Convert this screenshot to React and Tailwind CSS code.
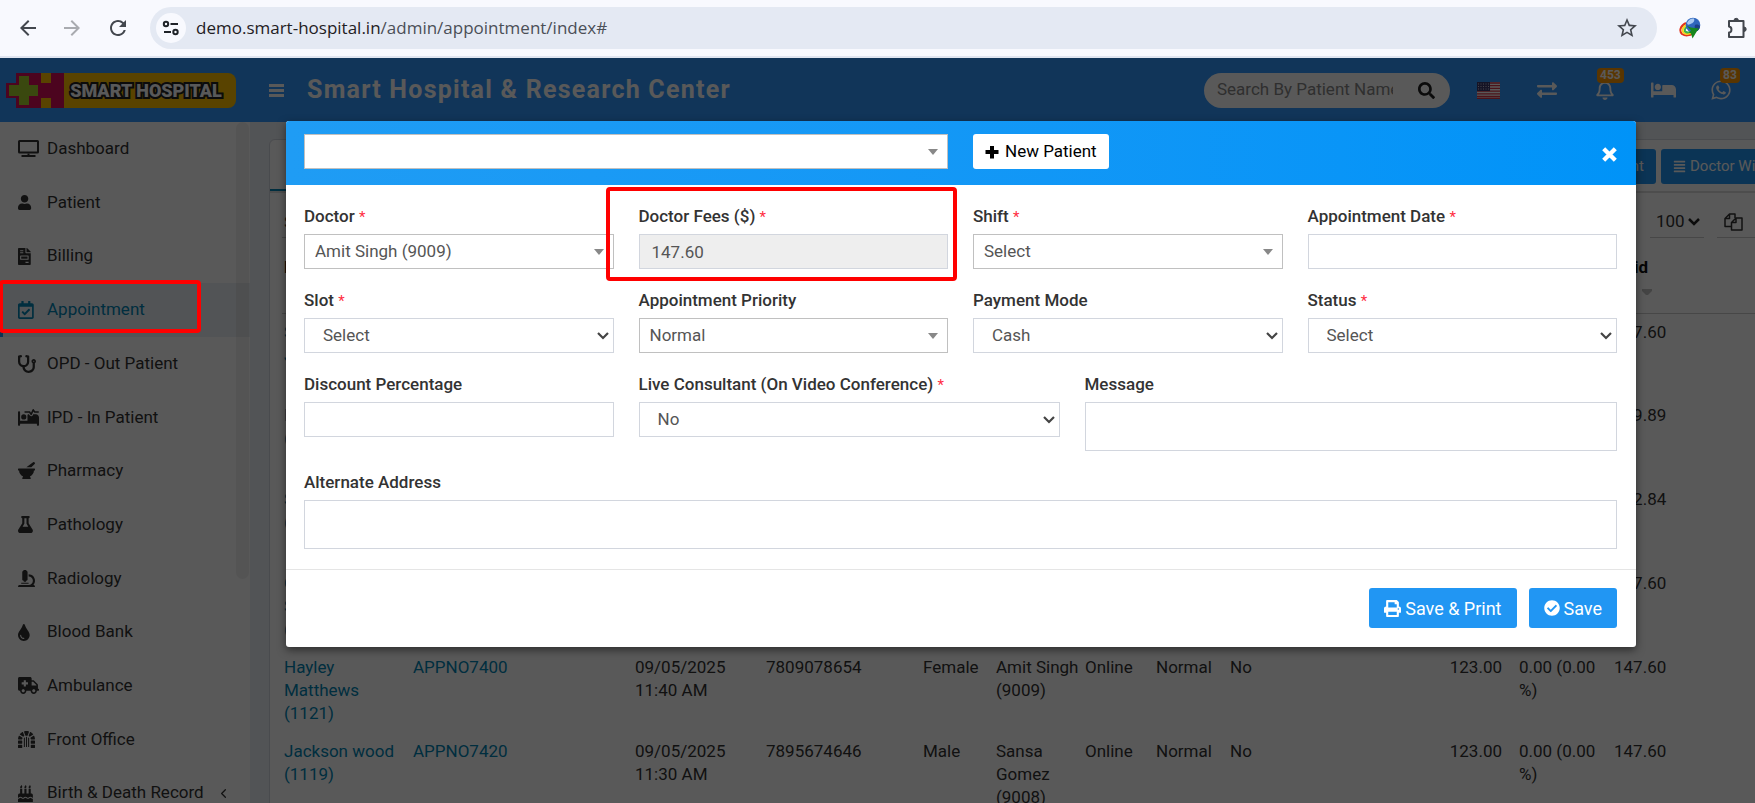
import {
  FaAlignJustify,
  FaAmbulance,
  FaBed,
  FaBirthdayCake,
  FaCheckCircle,
  FaDungeon,
  FaExchangeAlt,
  FaFileInvoice,
  FaFlask,
  FaMicroscope,
  FaMortarPestle,
  FaPrint,
  FaRegBell,
  FaRegCalendarCheck,
  FaSearch,
  FaStethoscope,
  FaTint,
  FaUser,
  FaWhatsapp,
} from "react-icons/fa";
import { FaBedPulse } from "react-icons/fa6";
import { MdArrowBack, MdArrowForward, MdRefresh, MdStarBorder } from "react-icons/md";
import { FiChevronLeft } from "react-icons/fi";

function Monitor({ className }) {
  return (
    <svg viewBox="0 0 21 17" className={className} fill="currentColor">
      <path fillRule="evenodd" d="M1.500 0h18A1.500 1.500 0 0 1 21 1.500v10.500a1.500 1.500 0 0 1-1.500 1.500h-18A1.500 1.500 0 0 1 0 12V1.500A1.500 1.500 0 0 1 1.500 0zM2 2v9.500h17V2z" />
      <path d="M9.500 13.500h2V15H9.500zM3.500 15h14v2h-14z" />
    </svg>
  );
}

const menu = [
  { label: "Dashboard", icon: Monitor, size: "h-[17px] w-[21px]" },
  { label: "Patient", icon: FaUser, size: "size-[15px]" },
  { label: "Billing", icon: FaFileInvoice, size: "size-[17px]" },
  { label: "Appointment", icon: FaRegCalendarCheck, size: "size-[18px]", active: true },
  { label: "OPD - Out Patient", icon: FaStethoscope, size: "size-[18px]" },
  { label: "IPD - In Patient", icon: FaBedPulse, size: "h-[17px] w-[21px]" },
  { label: "Pharmacy", icon: FaMortarPestle, size: "size-[17px]" },
  { label: "Pathology", icon: FaFlask, size: "size-[17px]" },
  { label: "Radiology", icon: FaMicroscope, size: "size-[17px]" },
  { label: "Blood Bank", icon: FaTint, size: "size-[17px]" },
  { label: "Ambulance", icon: FaAmbulance, size: "h-[17px] w-[21px]" },
  { label: "Front Office", icon: FaDungeon, size: "size-[17px]" },
  { label: "Birth & Death Record", icon: FaBirthdayCake, size: "size-[17px]", children: true },
];

const columns = [
  { label: "Patient Name", width: "w-[129px]" },
  { label: "Appointment No", width: "w-[222px]" },
  { label: "Date", width: "w-[131px]" },
  { label: "Phone", width: "w-[157px]" },
  { label: "Gender", width: "w-[73px]" },
  { label: "Doctor", width: "w-[89px]" },
  { label: "Source", width: "w-[71px]" },
  { label: "Priority", width: "w-[74px]" },
  { label: "Live", width: "w-[175px]" },
  { label: "Fees", width: "w-[114px]" },
  { label: "Discount", width: "w-[95px]" },
  { label: "Paid", width: "w-[180px]" },
];

const rows = [
  { name: ["Sam", "Jones (1124)"], no: "APPNO7396", time: "12:10 PM", phone: "7809078611", gender: "Male", doctor: "Amit Singh (9009)", fees: "123.00", paid: "147.60" },
  { name: ["Kevin", "(1123)"], no: "APPNO7397", time: "12:00 PM", phone: "7809078612", gender: "Male", doctor: "Amit Singh (9009)", fees: "133.00", paid: "159.89" },
  { name: ["Sara", "(1122)"], no: "APPNO7398", time: "11:55 AM", phone: "7809078613", gender: "Female", doctor: "Sansa Gomez (9008)", fees: "127.00", paid: "152.84" },
  { name: ["Olivier", "Smith", "(1120)"], no: "APPNO7399", time: "11:50 AM", phone: "7809078614", gender: "Male", doctor: "Amit Singh (9009)", fees: "123.00", paid: "147.60" },
  { name: ["Hayley", "Matthews", "(1121)"], no: "APPNO7400", time: "11:40 AM", phone: "7809078654", gender: "Female", doctor: "Amit Singh (9009)", fees: "123.00", paid: "147.60" },
  { name: ["Jackson wood", "(1119)"], no: "APPNO7420", time: "11:30 AM", phone: "7895674646", gender: "Male", doctor: "Sansa Gomez (9008)", fees: "123.00", paid: "147.60" },
];

function BrowserBar() {
  return (
    <div className="flex h-[58px] shrink-0 items-center border-b-2 border-[#e0e5f0] bg-[#f8f9fe] pl-4 text-[#43474e]">
      <button aria-label="Back" className="mr-5"><MdArrowBack className="size-6" /></button>
      <button aria-label="Forward" className="mr-[22px] text-[#a9abb0]"><MdArrowForward className="size-6" /></button>
      <button aria-label="Reload" className="mr-5"><MdRefresh className="size-6" /></button>
      <div className="flex h-[42px] flex-1 items-center rounded-full bg-[#e4e9f3] pr-[18px] pl-1.5">
        <button aria-label="Site information" className="mr-2.5 flex size-[30px] items-center justify-center rounded-full bg-[#f8f9fe]">
          <svg viewBox="0 0 18 16" className="h-4 w-[18px]" fill="none" stroke="#1f2328" strokeWidth="2">
            <circle cx="4" cy="4" r="2.2" />
            <path d="M8.500 4H16M2 12h7" />
            <circle cx="13.500" cy="12" r="2.200" />
          </svg>
        </button>
        <div className="flex-1 font-['Open_Sans','Noto_Sans',sans-serif] text-[17px] leading-6 text-[#4b4f57]">
          <span className="text-[#1f2023]">demo.smart-hospital.in</span>/admin/appointment/index#
        </div>
        <button aria-label="Bookmark"><MdStarBorder className="size-6" /></button>
      </div>
      <svg viewBox="0 0 22 22" className="ml-[22px] size-[22px]">
        <path d="M7 6c-6 3-7 8-4 11 3 2 8 2 11-1" fill="none" stroke="#e2341d" strokeWidth="2" />
        <path d="M7.500 8c-4 2-5 6-2.500 8 2 1.500 6 1 8-1" fill="none" stroke="#f5d31c" strokeWidth="2" />
        <path d="M8 10c-2.500 1.500-3 4-1 5s4 0 5-1" fill="none" stroke="#3bb54a" strokeWidth="2" />
        <circle cx="14" cy="8" r="7.300" fill="#2f66bd" />
        <path d="M8 6c1-3 4-5 7-4.500 1 3-1 4.500-3.500 5.500S8.500 8 8 6z" fill="#a9c8f0" />
        <path d="M16 8c2-1 4 0 5 1 0 2-1 4-3 5-2-1-3-4-2-6z" fill="#1b3f86" />
        <path d="M8 9l4 1.500 8 1-2 2.500-4.500 7.500-1.500-5-2-1 2-2z" fill="#17861f" />
      </svg>
      <svg viewBox="0 0 22 22" className="mr-[7px] ml-[25px] size-[22px]" fill="none" stroke="#43474e" strokeWidth="2" strokeLinejoin="round">
        <path d="M3 4h14.500v16H3v-4.500c3 0 3.500-5.500 0-6z" />
        <path d="M8 3.500a2.200 2.200 0 0 1 4.400 0zM18 10a2.200 2.200 0 0 1 0 4.400z" fill="#43474e" strokeWidth="1" />
      </svg>
    </div>
  );
}

function Logo() {
  return (
    <a href="#" className="flex h-[35px] w-[230px] overflow-hidden rounded-r-lg bg-[linear-gradient(90deg,transparent_12px,#ffbf00_12px)]">
      <svg viewBox="0 0 58 35" className="h-[35px] w-[58px] shrink-0">
        <path d="M0 0h14v35H0z" fill="#3298ff" />
        <path d="M10 0h48v35H10V25H0V10h10z" fill="#d90d5b" />
        <path d="M35 0h10v10H35zM35 25h10v10H35z" fill="#ffbf00" />
        <path d="M13 3h10v9h9v11h-9v9H13v-9H3V12h10z" fill="#a6cf2b" />
      </svg>
      <span className="flex-1 pr-2 text-center text-[18px] leading-[35px] font-black whitespace-nowrap text-white [-webkit-text-stroke:4px_#222] [paint-order:stroke_fill]">
        SMART HOSPITAL
      </span>
    </a>
  );
}

function UsFlag() {
  return (
    <svg viewBox="0 0 23 17" className="h-[17px] w-[23px]">
      <rect width="23" height="17" fill="#fff" />
      <path d="M0 1h23M0 3.700h23M0 6.400h23M0 9.100h23M0 11.800h23M0 14.500h23M0 16.500h23" stroke="#d8384a" strokeWidth="1.300" />
      <rect width="13" height="9" fill="#3c3b6e" />
      <path d="M1 2h12M1 4.500h12M1 7h12" stroke="#fff" strokeWidth="1" strokeDasharray="1 1.500" opacity=".7" />
    </svg>
  );
}

function NavIcon({ icon: Icon, label, badge, badgeClass, size }) {
  return (
    <button aria-label={label} className="relative flex h-6 w-[58px] items-center justify-center text-white">
      <Icon className={size} />
      {badge && (
        <span className={`absolute -top-2.5 rounded-sm bg-[#ff9800] px-[3px] text-[12px] leading-[15px] font-bold ${badgeClass}`}>
          {badge}
        </span>
      )}
    </button>
  );
}

function TopNav() {
  return (
    <header className="flex h-16 shrink-0 items-center bg-[#3298ff] pr-[5px] pl-1.5">
      <Logo />
      <button aria-label="Toggle menu" className="mr-[23px] ml-[33px] text-white">
        <svg viewBox="0 0 15 13" className="h-[13px] w-[15px]" fill="currentColor"><path d="M0 0h15v3H0zM0 5h15v3H0zM0 10h15v3H0z" /></svg>
      </button>
      <h1 className="flex-1 text-[25px] font-bold tracking-wider text-white">Smart Hospital &amp; Research Center</h1>
      <form className="flex h-[35px] w-[246px] items-center rounded-full bg-white pr-[15px] pl-[13px]">
        <input aria-label="Search patients" placeholder="Search By Patient Name" className="mr-auto w-[176px] text-[17px] text-[#444] outline-none placeholder:text-[#888]" />
        <button type="button" aria-label="Search"><FaSearch className="size-[17px] text-[#222]" /></button>
      </form>
      <button aria-label="Language" className="mr-[18px] ml-[27px]"><UsFlag /></button>
      <NavIcon icon={FaExchangeAlt} label="Switch branch" size="size-5" />
      <NavIcon icon={FaRegBell} label="Notifications" badge="453" badgeClass="left-[21px]" size="size-5" />
      <NavIcon icon={FaBed} label="Bed status" size="h-5 w-[25px]" />
      <NavIcon icon={FaWhatsapp} label="Messages" badge="83" badgeClass="left-7" size="size-[22px]" />
    </header>
  );
}

function Sidebar() {
  return (
    <aside className="relative w-[250px] shrink-0 bg-white">
      <nav className="grid h-[698px] auto-rows-fr">
        {menu.map(({ label, icon: Icon, active, size, children }) => (
          <a
            key={label}
            href="#"
            className={`flex items-center text-[17px] ${active ? "border-l-[3px] border-[#2196f3] bg-[#ecf0f5] pl-[15px] text-[#0084b4]" : "pl-[18px] text-[#333]"}`}
          >
            <span className="w-[29px]">
              <Icon className={size} preserveAspectRatio="xMinYMid meet" />
            </span>
            {label}
            {children && <FiChevronLeft className="ml-3 size-[15px]" />}
          </a>
        ))}
      </nav>
      <div className="absolute top-0 right-px h-[457px] w-[13px] rounded-full bg-black/6" />
    </aside>
  );
}

function AppointmentTable() {
  return (
    <table className="mt-3 ml-3 w-[1510px] table-fixed text-left text-[17px] leading-[23px] text-[#333]">
      <thead>
        <tr className="h-[63px] border-b border-[#ccc] align-top">
          {columns.map((c) => (
            <th key={c.label} className={`${c.width} overflow-hidden pt-1.5 pl-0.5 font-bold whitespace-nowrap text-[#111]`}>
              {c.label}
              <svg viewBox="0 0 10 6" className="mt-2.5 ml-7 h-1.5 w-2.5" fill="#c4c4c4"><path d="M0 0h10v2L6 6H4L0 2z" /></svg>
            </th>
          ))}
        </tr>
      </thead>
      <tbody>
        {rows.map((r) => (
          <tr key={r.no} className="h-[84px] align-top *:pt-[7px] *:pl-0.5">
            <td>
              <a href="#" className="text-[#0084b4]">{r.name.map((part) => <span key={part} className="block">{part}</span>)}</a>
            </td>
            <td><a href="#" className="text-[#0084b4]">{r.no}</a></td>
            <td>09/05/2025<br />{r.time}</td>
            <td>{r.phone}</td>
            <td>{r.gender}</td>
            <td>{r.doctor}</td>
            <td>Online</td>
            <td>Normal</td>
            <td>No</td>
            <td className="pr-[15px] text-right">{r.fees}</td>
            <td>0.00 (0.00<br />%)</td>
            <td>{r.paid}</td>
          </tr>
        ))}
      </tbody>
    </table>
  );
}

function AppointmentList() {
  return (
    <main className="min-w-0 flex-1 overflow-hidden bg-[#ecf0f5] pt-[17px] pl-[19px]">
      <section className="w-[calc(100%+50px)] rounded-md border border-[#d2d6de] bg-white">
        <div className="flex h-[53px] border-b-2 border-[#ddd] text-[15px] text-white">
          <div className="w-40 border-b-2 border-[#0084b4]" />
          <div className="mt-[9px] mr-5 ml-auto flex h-[35px] gap-[5px]">
            <button className="rounded-[3px] bg-[#2196f3] px-3">Add Appointment</button>
            <button className="flex w-[123px] items-center gap-1 rounded-[3px] bg-[#2196f3] pl-3 whitespace-nowrap">
              <FaAlignJustify className="size-[13px]" /> Doctor Wise
            </button>
          </div>
        </div>
        <div className="mr-3 ml-3 flex h-[45px] items-end text-[17px] text-[#333]">
          <input aria-label="Search" placeholder="Search..." className="mr-auto h-8 w-[240px] border-b border-[#ccc] pl-0.5 placeholder:text-[#444]" />
          <span className="relative mr-[13px]">
            <select aria-label="Rows per page" className="h-8 w-[54px] appearance-none border-b border-[#ccc] pl-1.5">
              <option>100</option>
            </select>
            <svg viewBox="0 0 12 8" className="absolute top-3 right-1 h-2 w-3" fill="none" stroke="#222" strokeWidth="2.500"><path d="M1 1l5 5 5-5" /></svg>
          </span>
          <button aria-label="Copy" className="flex h-8 w-[75px] items-center border-b border-[#ccc] pl-[7px]">
            <svg viewBox="0 0 19 18" className="h-[18px] w-[19px]" fill="none" stroke="currentColor" strokeWidth="1.500" strokeLinejoin="round">
              <path d="M7.500 13.500H1V5.500L5.500 1h5.500v4M5.500 1v4.500H1" />
              <path d="M12 5h6v12H7.500V9.500zM12 5v4.500H7.500" />
            </svg>
          </button>
        </div>
        <AppointmentTable />
      </section>
    </main>
  );
}

function Field({ id, label, required, span, children }) {
  return (
    <div className={span}>
      <label htmlFor={id} className="mb-1.5 block h-6 text-[17px] leading-6 font-medium text-[#333]">
        {label} {required && <span className="text-[15px] leading-none font-normal text-[#ff2d42]">*</span>}
      </label>
      {children}
    </div>
  );
}

const inputClass = "block h-[35px] w-full border border-[#d2d6de] bg-white px-3 text-[17px] text-[#555] outline-none";

// variant "search" has the solid triangle, "native" the browser chevron
function Select({ id, value, variant = "native", ...rest }) {
  return (
    <div className="relative">
      <select
        id={id}
        className={`block h-[35px] w-full appearance-none border bg-white text-[17px] text-[#555] outline-none ${variant === "search" ? "border-[#c0c0c0] pl-2.5" : "border-[#d2d6de] pl-[18px]"}`}
        {...rest}
      >
        <option>{value}</option>
      </select>
      {variant === "search" ? (
        <svg viewBox="0 0 10 6" className="pointer-events-none absolute top-[15px] right-2.5 h-1.5 w-2.5" fill="#888"><path d="M0 0h10L5 6z" /></svg>
      ) : (
        <svg viewBox="0 0 12 8" className="pointer-events-none absolute top-[14px] right-[5px] h-2 w-3" fill="none" stroke="#444" strokeWidth="2.200"><path d="M1 1l5 5 5-5" /></svg>
      )}
    </div>
  );
}

function AppointmentModal() {
  return (
    <div role="dialog" aria-label="Add appointment" className="absolute top-[63px] right-[119px] left-[286px] rounded-[3px] bg-white shadow-[0_3px_9px_rgba(0,0,0,0.5)]">
      <div className="grid h-16 grid-cols-12 gap-x-[25px] rounded-t-[3px] bg-linear-to-r from-[#1f9cf4] to-[#0093f8] pt-[13px] pr-[19px] pl-[18px]">
        <div className="col-span-6"><Select id="patient" value="" variant="search" aria-label="Patient" /></div>
        <div className="col-span-6 flex items-start justify-between">
          <button className="flex h-[35px] items-center gap-1.5 rounded-[3px] bg-white px-3 text-[17px] text-black">
            <svg viewBox="0 0 14 14" className="size-[14px]" fill="currentColor"><path d="M5 1h4v4h4.500v4H9v4.500H5V9H.5V5H5z" /></svg>
            New Patient
          </button>
          <button aria-label="Close" className="mt-[13px] text-white">
            <svg viewBox="0 0 14 14" className="size-[15px]" fill="none" stroke="currentColor" strokeWidth="4" strokeLinecap="square"><path d="M3 3l8 8M11 3l-8 8" /></svg>
          </button>
        </div>
      </div>

      <form className="grid grid-cols-12 gap-x-[25px] gap-y-[19px] pt-[19px] pr-[19px] pb-5 pl-[18px]">
        <Field id="doctor" label="Doctor" required span="col-span-3"><Select id="doctor" value="Amit Singh (9009)" variant="search" /></Field>
        <div className="relative col-span-3">
          <Field id="fees" label="Doctor Fees ($)" required><input id="fees" readOnly defaultValue="147.60" className={`${inputClass} bg-[#eee]!`} /></Field>
          <div className="pointer-events-none absolute -inset-x-[33px] -top-[17px] -bottom-3 mr-6 rounded-sm border-4 border-[#ff0000]" />
        </div>
        <Field id="shift" label="Shift" required span="col-span-3"><Select id="shift" value="Select" variant="search" /></Field>
        <Field id="date" label="Appointment Date" required span="col-span-3"><input id="date" className={inputClass} /></Field>

        <Field id="slot" label="Slot" required span="col-span-3"><Select id="slot" value="Select" /></Field>
        <Field id="priority" label="Appointment Priority" span="col-span-3"><Select id="priority" value="Normal" variant="search" /></Field>
        <Field id="payment" label="Payment Mode" span="col-span-3"><Select id="payment" value="Cash" /></Field>
        <Field id="status" label="Status" required span="col-span-3"><Select id="status" value="Select" /></Field>

        <Field id="discount" label="Discount Percentage" span="col-span-3"><input id="discount" className={inputClass} /></Field>
        <Field id="live" label="Live Consultant (On Video Conference)" required span="col-span-4"><Select id="live" value="No" /></Field>
        <Field id="message" label="Message" span="col-span-5"><textarea id="message" className={`${inputClass} h-[49px]! resize-none`} /></Field>

        <Field id="address" label="Alternate Address" span="col-span-12"><textarea id="address" className={`${inputClass} h-[49px]! resize-none`} /></Field>
      </form>

      <div className="flex justify-end gap-3 border-t border-[#e5e5e5] pt-[18px] pr-[19px] pb-[19px]">
        <button className="flex h-10 items-center gap-1 rounded-[3px] bg-[#2196f3] px-[15px] text-[18px] text-white"><FaPrint className="size-[17px]" /> Save &amp; Print</button>
        <button className="flex h-10 items-center gap-1 rounded-[3px] bg-[#2196f3] px-[15px] text-[18px] text-white"><FaCheckCircle className="size-4" /> Save</button>
      </div>
    </div>
  );
}

export default function App() {
  return (
    <div className="flex h-screen flex-col overflow-hidden font-[Roboto,sans-serif]">
      <BrowserBar />
      <div className="relative flex min-h-0 flex-1 flex-col overflow-hidden">
        <TopNav />
        <div className="flex min-h-0 flex-1 overflow-hidden">
          <Sidebar />
          <AppointmentList />
        </div>
        <div className="absolute inset-0 bg-black/65" />
        <div className="pointer-events-none absolute top-[222px] -left-px h-[53px] w-[202px] rounded-sm border-4 border-[#ff0000]" />
        <AppointmentModal />
      </div>
    </div>
  );
}
